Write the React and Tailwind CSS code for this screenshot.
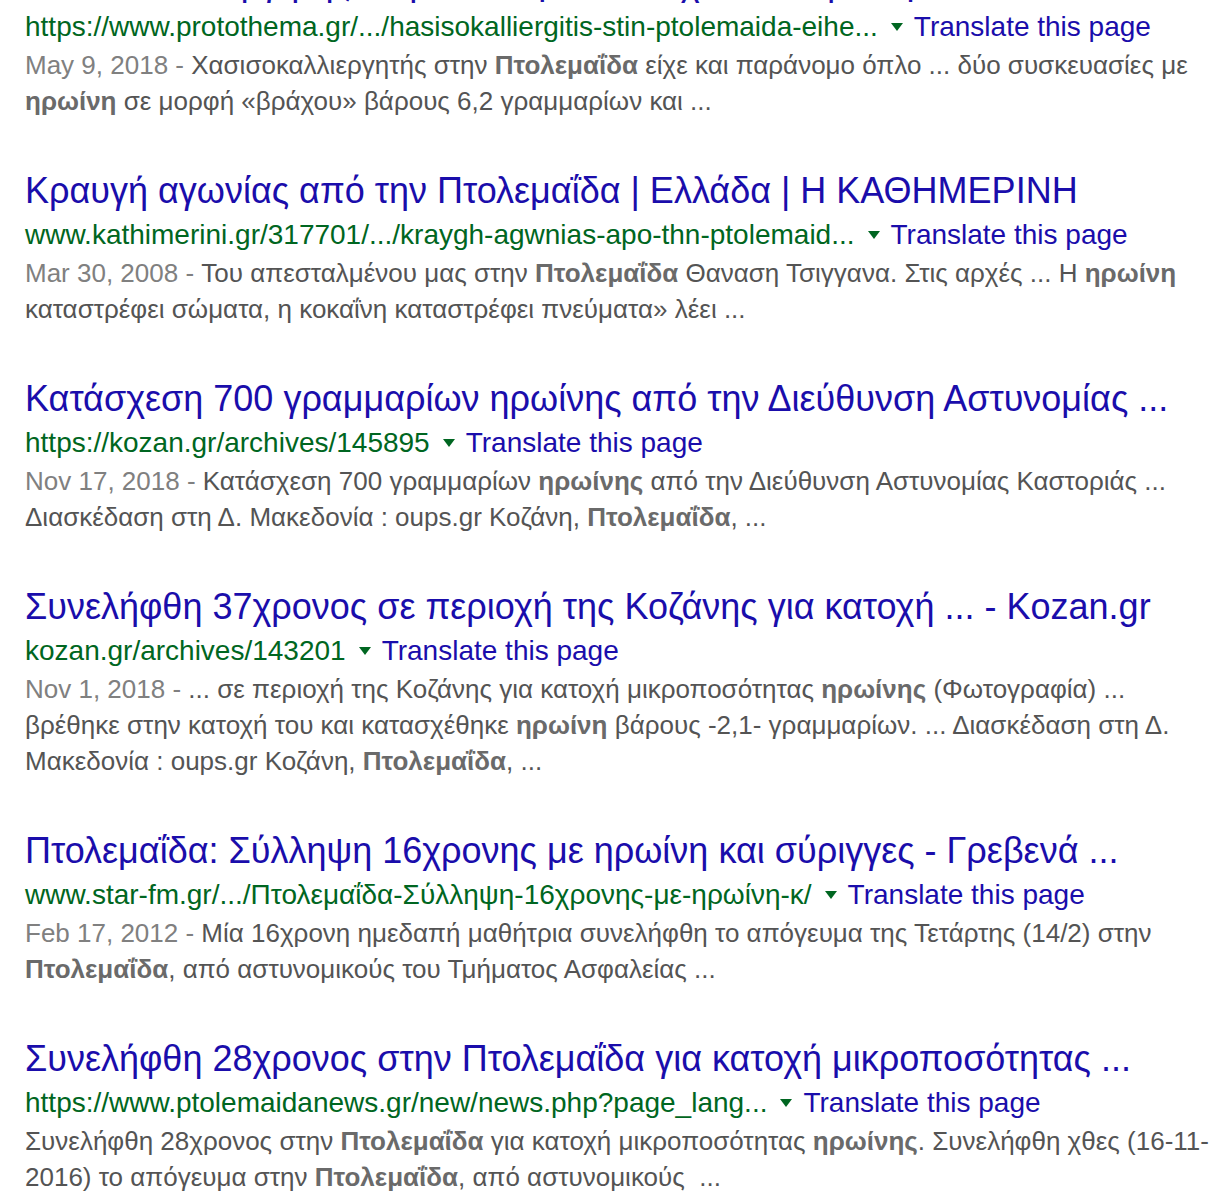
import React from 'react';

// Search results list, shown at 2x scale
const results = [
  {
    title: 'Χασισοκαλλιεργητής στην Πτολεμαΐδα: Είχε και παράνομο όπλο - ΠΡΩΤΟ ΘΕΜΑ',
    url: 'https://www.protothema.gr/.../hasisokalliergitis-stin-ptolemaida-eihe...',
    date: 'May 9, 2018',
    lines: [
      [['Χασισοκαλλιεργητής στην '], ['Πτολεμαΐδα', true], [' είχε και παράνομο όπλο ... δύο συσκευασίες με']],
      [['ηρωίνη', true], [' σε μορφή «βράχου» βάρους 6,2 γραμμαρίων και ...']],
    ],
  },
  {
    title: 'Κραυγή αγωνίας από την Πτολεμαΐδα | Ελλάδα | Η ΚΑΘΗΜΕΡΙΝΗ',
    url: 'www.kathimerini.gr/317701/.../kraygh-agwnias-apo-thn-ptolemaid...',
    date: 'Mar 30, 2008',
    lines: [
      [['Του απεσταλμένου μας στην '], ['Πτολεμαΐδα', true], [' Θαναση Τσιγγανα. Στις αρχές ... Η '], ['ηρωίνη', true]],
      [['καταστρέφει σώματα, η κοκαΐνη καταστρέφει πνεύματα» λέει ...']],
    ],
  },
  {
    title: 'Κατάσχεση 700 γραμμαρίων ηρωίνης από την Διεύθυνση Αστυνομίας ...',
    url: 'https://kozan.gr/archives/145895',
    date: 'Nov 17, 2018',
    lines: [
      [['Κατάσχεση 700 γραμμαρίων '], ['ηρωίνης', true], [' από την Διεύθυνση Αστυνομίας Καστοριάς ...']],
      [['Διασκέδαση στη Δ. Μακεδονία : oups.gr Κοζάνη, '], ['Πτολεμαΐδα', true], [', ...']],
    ],
  },
  {
    title: 'Συνελήφθη 37χρονος σε περιοχή της Κοζάνης για κατοχή ... - Kozan.gr',
    url: 'kozan.gr/archives/143201',
    date: 'Nov 1, 2018',
    lines: [
      [['... σε περιοχή της Κοζάνης για κατοχή μικροποσότητας '], ['ηρωίνης', true], [' (Φωτογραφία) ...']],
      [['βρέθηκε στην κατοχή του και κατασχέθηκε '], ['ηρωίνη', true], [' βάρους -2,1- γραμμαρίων. ... Διασκέδαση στη Δ.']],
      [['Μακεδονία : oups.gr Κοζάνη, '], ['Πτολεμαΐδα', true], [', ...']],
    ],
  },
  {
    title: 'Πτολεμαΐδα: Σύλληψη 16χρονης με ηρωίνη και σύριγγες - Γρεβενά ...',
    url: 'www.star-fm.gr/.../Πτολεμαΐδα-Σύλληψη-16χρονης-με-ηρωίνη-κ/',
    date: 'Feb 17, 2012',
    lines: [
      [['Μία 16χρονη ημεδαπή μαθήτρια συνελήφθη το απόγευμα της Τετάρτης (14/2) στην']],
      [['Πτολεμαΐδα', true], [', από αστυνομικούς του Τμήματος Ασφαλείας ...']],
    ],
  },
  {
    title: 'Συνελήφθη 28χρονος στην Πτολεμαΐδα για κατοχή μικροποσότητας ...',
    url: 'https://www.ptolemaidanews.gr/new/news.php?page_lang...',
    date: null,
    lines: [
      [['Συνελήφθη 28χρονος στην '], ['Πτολεμαΐδα', true], [' για κατοχή μικροποσότητας '], ['ηρωίνης', true], ['. Συνελήφθη χθες (16-11-']],
      [['2016) το απόγευμα στην '], ['Πτολεμαΐδα', true], [', από αστυνομικούς  ...']],
    ],
  },
];

const Result = ({ item }) => (
  <div className="mb-[47px]">
    <h3 className="pt-[2px] text-[36px] leading-[46px] text-[#1a0dab] whitespace-nowrap">{item.title}</h3>
    <div className="flex items-center h-[42px] whitespace-nowrap">
      <cite className="not-italic text-[28px] text-[#006621]">{item.url}</cite>
      <span className="ml-[13px] mr-[11px] w-0 h-0 border-t-[8px] border-t-[#006621] border-x-[6px] border-x-transparent" />
      <span className="text-[28px] text-[#1a0dab]">Translate this page</span>
    </div>
    <div className="-mt-px text-[26px] leading-[36px] text-[#545454] whitespace-pre">
      {item.lines.map((line, i) => (
        <div key={i}>
          {i === 0 && item.date && <span className="text-[#808080]">{item.date} - </span>}
          {line.map(([text, bold], j) =>
            bold ? (
              <b key={j} className="font-bold text-[#6a6a6a]">{text}</b>
            ) : (
              <span key={j}>{text}</span>
            )
          )}
        </div>
      ))}
    </div>
  </div>
);

export default function App() {
  return (
    <div className="w-[1216px] h-[1204px] overflow-hidden bg-white" style={{ fontFamily: '"Liberation Sans", Arial, sans-serif' }}>
      <div className="pl-[25px] -mt-[42px]">
        {results.map((item, i) => (
          <Result key={i} item={item} />
        ))}
      </div>
    </div>
  );
}
